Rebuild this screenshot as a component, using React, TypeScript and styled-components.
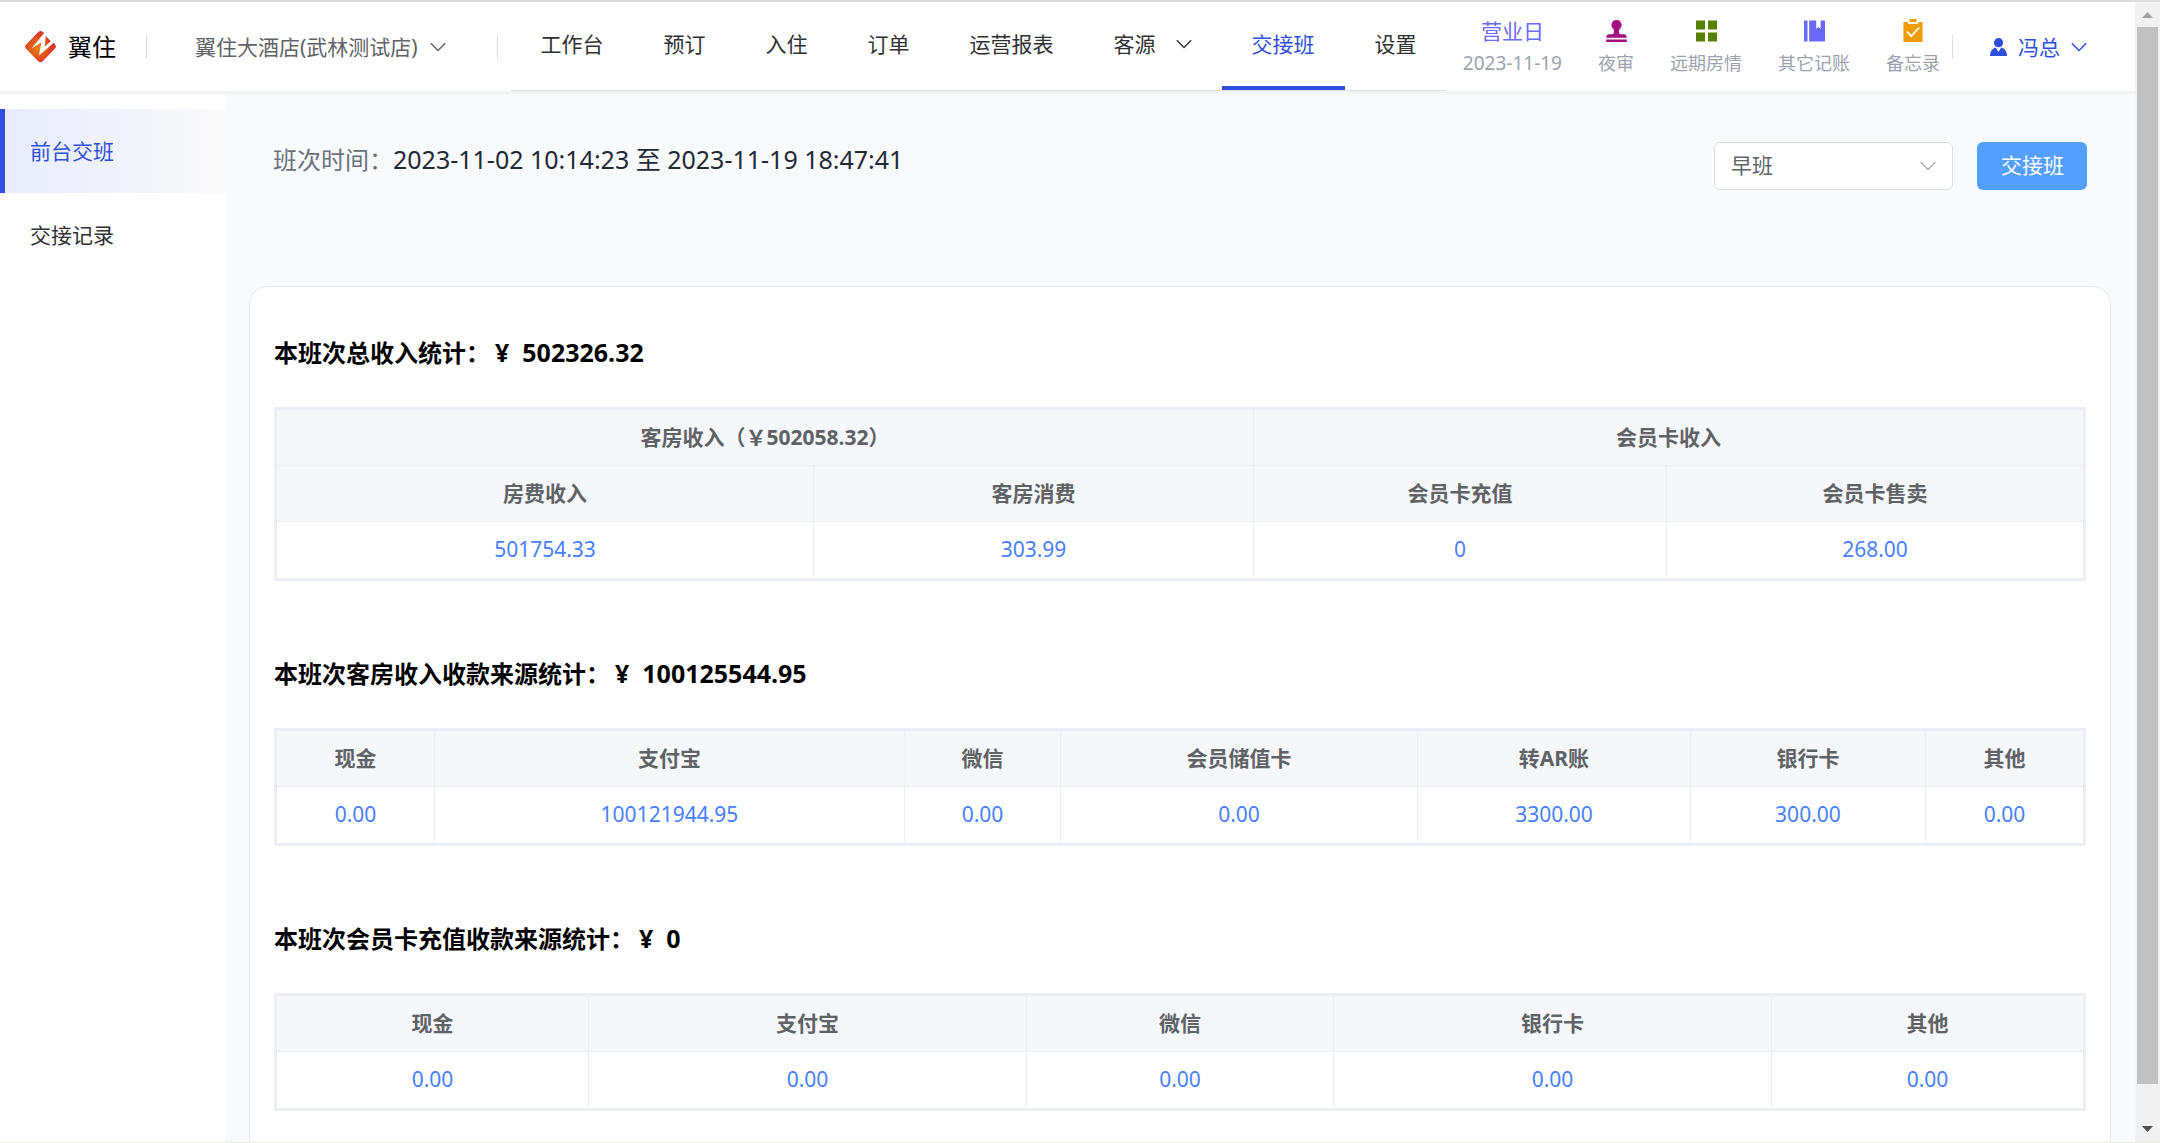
import React from "react";
import styled, { createGlobalStyle } from "styled-components";

const GlobalStyle = createGlobalStyle`
  *, *::before, *::after { box-sizing: border-box; }
  body {
    margin: 0;
    background: #fff;
    color: #303133;
    font-family: "Noto Sans", "Noto Sans CJK SC", sans-serif;
    font-size: 21px;
    line-height: 32px;
  }
  h2, p { margin: 0; }
  a { color: inherit; text-decoration: none; }
  button, select { font: inherit; }
`;

const Frame = styled.div`
  display: flex;
  height: 100vh;
  overflow: hidden;
  border-top: 2px solid #dcdcdc;
  border-bottom: 1px solid #e8eedb;
`;

const Page = styled.div`
  flex: 1;
  min-width: 0;
  display: flex;
  flex-direction: column;
`;

const Header = styled.header`
  flex: none;
  display: flex;
  align-items: center;
  height: 92px;
  padding: 0 48px 0 25px;
  border-bottom: 3px solid #f2f3f5;
  white-space: nowrap;
`;

const Brand = styled.a`
  display: flex;
  align-items: center;
  gap: 12px;
  padding-right: 30px;
  font-size: 24px;
  color: #000;
`;

const Divider = styled.span`
  flex: none;
  width: 1px;
  height: 24px;
  background: #dcdfe6;
`;

const HotelPicker = styled.button`
  display: flex;
  align-items: center;
  gap: 12px;
  padding: 0 51px 0 48px;
  border: 0;
  background: none;
  color: #606266;
`;

const Menu = styled.nav`
  align-self: stretch;
  display: flex;
  margin-left: 13px;
  border-bottom: 1px solid #dcdfe6;
`;

const MenuLink = styled.a<{ $active?: boolean }>`
  display: flex;
  align-items: center;
  gap: 20px;
  padding: 0 30px;
  border-bottom: 4px solid ${(p) => (p.$active ? "#2f50dd" : "transparent")};
  color: ${(p) => (p.$active ? "#2f50dd" : "#303133")};
`;

const Tools = styled.div`
  display: flex;
  gap: 36px;
  margin-left: auto;
  padding: 0 12px;
`;

const Tool = styled.button`
  display: flex;
  flex-direction: column;
  align-items: center;
  padding: 0;
  border: 0;
  background: none;
  color: #9ca3af;
  font-size: 18px;
`;

const ToolTop = styled.span`
  display: flex;
  align-items: center;
  height: 32px;
  font-size: 21px;
  color: #6a6af8;
`;

const ToolDate = styled.time`
  font-size: 19px;
`;

const User = styled.button`
  display: flex;
  align-items: center;
  gap: 11px;
  padding: 0 0 0 37px;
  border: 0;
  background: none;
  color: #2f50dd;
`;

const Body = styled.div`
  flex: 1;
  min-height: 0;
  display: flex;
`;

const Sidebar = styled.nav`
  flex: none;
  width: 225px;
  padding-top: 15px;
`;

const SideLink = styled.a<{ $active?: boolean }>`
  display: flex;
  align-items: center;
  height: 84px;
  padding-left: 25px;
  border-left: 5px solid ${(p) => (p.$active ? "#2f50dd" : "transparent")};
  background: ${(p) => (p.$active ? "linear-gradient(90deg, #e8ecfc, #fafafa)" : "none")};
  color: ${(p) => (p.$active ? "#2f50dd" : "#303133")};
`;

const Main = styled.main`
  flex: 1;
  min-width: 0;
  overflow: hidden;
  padding: 48px 24px 0;
  background: #f9fafc;
`;

const Toolbar = styled.div`
  display: flex;
  align-items: flex-start;
  justify-content: space-between;
  height: 144px;
  padding: 0 24px;
`;

const Period = styled.p`
  font-size: 24px;
  line-height: 36px;
  color: #6b7280;
`;

const PeriodValue = styled.span`
  font-size: 25px;
  line-height: 24px;
  color: #1f2937;
`;

const Actions = styled.div`
  display: flex;
  gap: 24px;
`;

const SelectBox = styled.label`
  position: relative;
  display: flex;
  width: 239px;
  color: #a8abb2;

  svg {
    position: absolute;
    right: 17px;
    top: 16px;
    pointer-events: none;
  }
`;

const Select = styled.select`
  appearance: none;
  width: 100%;
  height: 48px;
  padding: 0 16px 2px;
  border: 1px solid #dcdfe6;
  border-radius: 6px;
  background: #fff;
  color: #606266;
`;

const PrimaryButton = styled.button`
  height: 48px;
  padding: 0 23px 2px 24px;
  border: 0;
  border-radius: 6px;
  background: #549eff;
  color: #fff;
`;

const Card = styled.div`
  display: flex;
  flex-direction: column;
  gap: 75px;
  padding: 48px 24px 75px;
  border: 1px solid #e5e7eb;
  border-radius: 18px;
  background: #fff;
`;

const SectionTitle = styled.h2`
  margin-bottom: 36px;
  font-size: 24px;
  line-height: 36px;
  font-weight: 700;
  color: #000;
`;

const Amount = styled.span`
  padding-left: 5px;
  font-size: 25px;
  line-height: 24px;
  white-space: pre;
`;

const Table = styled.table`
  width: 100%;
  table-layout: fixed;
  border: 3px solid #ebeef5;
  border-collapse: separate;
  border-spacing: 0;
  text-align: center;
`;

const Col = styled.col<{ $share: number }>`
  width: ${(p) => p.$share}%;
`;

const cell = `
  height: 56px;
  padding: 0 0 2px;
  &:not(:last-child) { border-right: 1px solid #ebeef5; }
`;

const Th = styled.th`
  ${cell}
  border-bottom: 1px solid #ebeef5;
  background: #f5f7fb;
  color: #606266;
  font-weight: 700;
`;

const Td = styled.td`
  ${cell}
  color: #4880ff;
`;

const Scrollbar = styled.div`
  flex: none;
  display: flex;
  flex-direction: column;
  align-items: center;
  width: 25px;
  background: #f1f1f1;
`;

const ScrollTrack = styled.div`
  flex: 1;
  width: 21px;
`;

const ScrollThumb = styled.div`
  height: 97%;
  background: #c1c1c1;
`;

const ScrollArrow = styled.span<{ $down?: boolean }>`
  display: flex;
  align-items: center;
  justify-content: center;
  height: 25px;
  color: ${(p) => (p.$down ? "#505050" : "#a3a3a3")};
  transform: ${(p) => (p.$down ? "rotate(180deg)" : "none")};
`;

const Chevron = ({ size = 16 }: { size?: number }) => (
  <svg width={size} height={size} viewBox="0 0 16 16" fill="none" stroke="currentColor" strokeWidth="1.4">
    <path d="M.8 4.2 8 11.6l7.2-7.4" />
  </svg>
);

const Logo = () => (
  <svg width="31" height="32" viewBox="0 0 31 32">
    <defs>
      <radialGradient id="brand" cx=".42" cy=".55" r=".6">
        <stop offset="0" stopColor="#e8840c" />
        <stop offset="1" stopColor="#d8262a" />
      </radialGradient>
    </defs>
    <path
      fill="url(#brand)"
      d="M13.5.8Q15.500-.6 17.500.8L19 2.200 6.500 17.500 16.300 11.500 14 24.500 29 11.500l1.200 2.400q1.400 1.700 0 3.400L17.500 30.500q-2 1.600-4 0L.8 17.500q-1.400-1.700 0-3.400zM20.800 5l5 5.300-6.200 5.500z"
    />
  </svg>
);

const StampIcon = () => (
  <svg width="21" height="22" viewBox="0 0 21 22" fill="#a0107f">
    <path d="M10.500 0a5 5 0 0 1 3.200 8.900q-.9.900-.7 3.300.1 2 2 2H18q2.600.4 2.800 3.600H.2q.2-3.200 2.800-3.600h3q1.900 0 2-2 .2-2.400-.7-3.300A5 5 0 0 1 10.500 0zM.2 19.500h20.600V22H.2z" />
  </svg>
);

const GridIcon = () => (
  <svg width="21" height="22" viewBox="0 0 21 22" fill="#568000">
    <path d="M0 .5h9v9H0zM12 .5h9v9h-9zM0 12.500h9v9H0zM12 12.500h9v9h-9z" />
  </svg>
);

const BookIcon = () => (
  <svg width="21" height="22" viewBox="0 0 21 22" fill="#6a6af8">
    <path d="M0 .5h3.500v21H0zM5.200.5h7v8.500l2.200-2.200L16.600 9V.5H21v21H5.200z" />
  </svg>
);

const MemoIcon = () => (
  <svg width="20" height="23" viewBox="0 0 20 23">
    <path fill="#f09c00" d="M6.500 0h7v3h-7zM.5 3H5v2h10V3h4.500v20H.5z" />
    <path fill="none" stroke="#fff" strokeWidth="1.800" d="m4 12.500 4.200 4.700L16.200 8.500" />
  </svg>
);

const UserIcon = () => (
  <svg width="17" height="18" viewBox="0 0 17 18" fill="currentColor">
    <circle cx="8.500" cy="4.700" r="4.600" />
    <path d="M0 18q.2-7.300 5.800-8.500l2.700 4.500 2.700-4.500Q16.800 10.700 17 18z" />
  </svg>
);

const Triangle = () => (
  <svg width="11" height="6" viewBox="0 0 11 6" fill="currentColor">
    <path d="M5.500 0 11 6H0z" />
  </svg>
);

const menu = [
  { label: "工作台" },
  { label: "预订" },
  { label: "入住" },
  { label: "订单" },
  { label: "运营报表" },
  { label: "客源", nested: true },
  { label: "交接班", active: true },
  { label: "设置" },
];

const tools = [
  { label: "夜审", Icon: StampIcon },
  { label: "远期房情", Icon: GridIcon },
  { label: "其它记账", Icon: BookIcon },
  { label: "备忘录", Icon: MemoIcon },
];

type Column = { name: string; value: string; weight: number };
type Group = { name: string; span: number };
type Report = { title: string; total: string; groups?: Group[]; columns: Column[] };

const reports: Report[] = [
  {
    title: "本班次总收入统计：",
    total: "502326.32",
    groups: [
      { name: "客房收入（￥502058.32）", span: 2 },
      { name: "会员卡收入", span: 2 },
    ],
    columns: [
      { name: "房费收入", value: "501754.33", weight: 537 },
      { name: "客房消费", value: "303.99", weight: 440 },
      { name: "会员卡充值", value: "0", weight: 413 },
      { name: "会员卡售卖", value: "268.00", weight: 416 },
    ],
  },
  {
    title: "本班次客房收入收款来源统计：",
    total: "100125544.95",
    columns: [
      { name: "现金", value: "0.00", weight: 158 },
      { name: "支付宝", value: "100121944.95", weight: 470 },
      { name: "微信", value: "0.00", weight: 156 },
      { name: "会员储值卡", value: "0.00", weight: 357 },
      { name: "转AR账", value: "3300.00", weight: 273 },
      { name: "银行卡", value: "300.00", weight: 235 },
      { name: "其他", value: "0.00", weight: 157 },
    ],
  },
  {
    title: "本班次会员卡充值收款来源统计：",
    total: "0",
    columns: [
      { name: "现金", value: "0.00", weight: 312 },
      { name: "支付宝", value: "0.00", weight: 438 },
      { name: "微信", value: "0.00", weight: 307 },
      { name: "银行卡", value: "0.00", weight: 438 },
      { name: "其他", value: "0.00", weight: 311 },
    ],
  },
];

const ReportSection = ({ report }: { report: Report }) => {
  const sum = report.columns.reduce((total, c) => total + c.weight, 0);
  return (
    <section>
      <SectionTitle>
        {report.title}
        <Amount>{`¥  ${report.total}`}</Amount>
      </SectionTitle>
      <Table>
        <colgroup>
          {report.columns.map((c) => (
            <Col key={c.name} $share={(c.weight / sum) * 100} />
          ))}
        </colgroup>
        <thead>
          {report.groups && (
            <tr>
              {report.groups.map((g) => (
                <Th key={g.name} colSpan={g.span} scope="colgroup">
                  {g.name}
                </Th>
              ))}
            </tr>
          )}
          <tr>
            {report.columns.map((c) => (
              <Th key={c.name} scope="col">
                {c.name}
              </Th>
            ))}
          </tr>
        </thead>
        <tbody>
          <tr>
            {report.columns.map((c) => (
              <Td key={c.name}>{c.value}</Td>
            ))}
          </tr>
        </tbody>
      </Table>
    </section>
  );
};

export default function App() {
  return (
    <>
      <GlobalStyle />
      <Frame>
        <Page>
          <Header>
            <Brand href="#">
              <Logo />
              翼住
            </Brand>
            <Divider />
            <HotelPicker type="button">
              翼住大酒店(武林测试店)
              <Chevron />
            </HotelPicker>
            <Divider />
            <Menu>
              {menu.map((m) => (
                <MenuLink key={m.label} href="#" $active={m.active}>
                  {m.label}
                  {m.nested && <Chevron />}
                </MenuLink>
              ))}
            </Menu>
            <Tools>
              <Tool type="button">
                <ToolTop>营业日</ToolTop>
                <ToolDate>2023-11-19</ToolDate>
              </Tool>
              {tools.map(({ label, Icon }) => (
                <Tool key={label} type="button">
                  <ToolTop>
                    <Icon />
                  </ToolTop>
                  {label}
                </Tool>
              ))}
            </Tools>
            <Divider />
            <User type="button">
              <UserIcon />
              冯总
              <Chevron />
            </User>
          </Header>
          <Body>
            <Sidebar>
              <SideLink href="#" $active>
                前台交班
              </SideLink>
              <SideLink href="#">交接记录</SideLink>
            </Sidebar>
            <Main>
              <Toolbar>
                <Period>
                  班次时间：
                  <PeriodValue>2023-11-02 10:14:23 至 2023-11-19 18:47:41</PeriodValue>
                </Period>
                <Actions>
                  <SelectBox>
                    <Select aria-label="班次" defaultValue="早班">
                      <option>早班</option>
                    </Select>
                    <Chevron />
                  </SelectBox>
                  <PrimaryButton type="button">交接班</PrimaryButton>
                </Actions>
              </Toolbar>
              <Card>
                {reports.map((r) => (
                  <ReportSection key={r.title} report={r} />
                ))}
              </Card>
            </Main>
          </Body>
        </Page>
        <Scrollbar aria-hidden="true">
          <ScrollArrow>
            <Triangle />
          </ScrollArrow>
          <ScrollTrack>
            <ScrollThumb />
          </ScrollTrack>
          <ScrollArrow $down>
            <Triangle />
          </ScrollArrow>
        </Scrollbar>
      </Frame>
    </>
  );
}
